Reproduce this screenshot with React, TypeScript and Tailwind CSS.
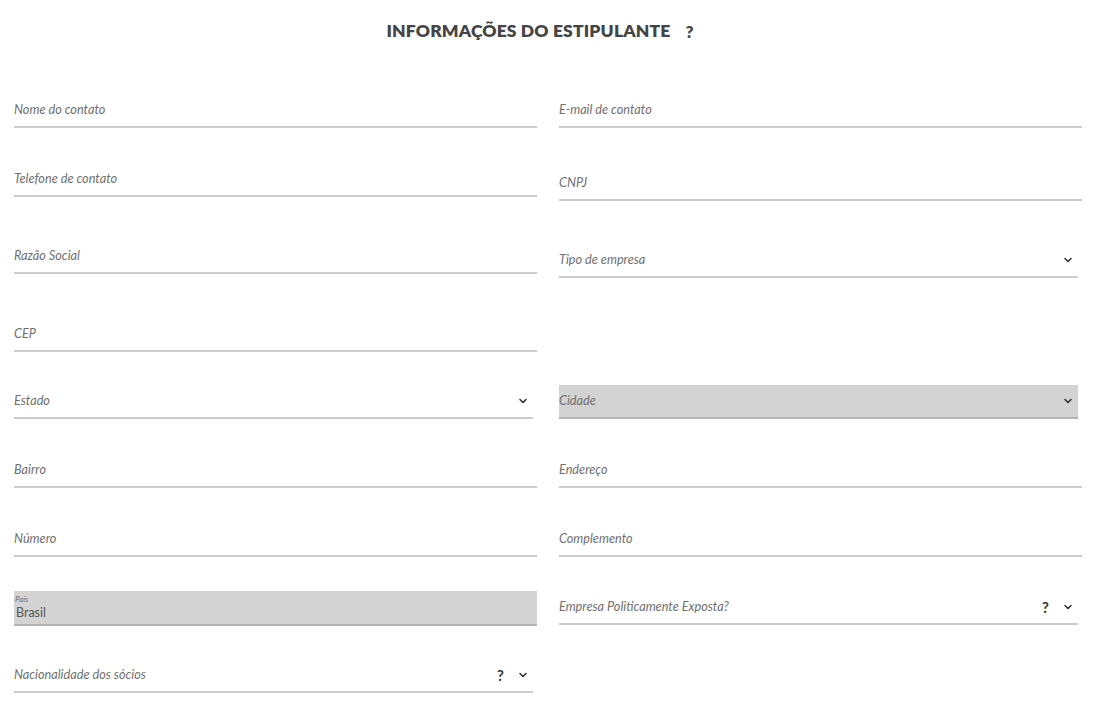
import { ChevronDown } from 'lucide-react';

type FieldProps = {
  label: string;
  select?: boolean;
  help?: boolean;
  disabled?: boolean;
};

function Field({ label, select, help, disabled }: FieldProps) {
  return (
    <div
      className={`flex h-[34px] items-center border-b-2 ${
        disabled ? 'border-[#b4b4b4] bg-[#d3d3d3]' : 'border-[#cbcbcb]'
      } ${select ? 'w-[519px]' : 'w-[523px]'}`}
    >
      <span className="flex-1 text-[12.7px] italic text-[#707070]">{label}</span>
      {help && <span className="mr-[13px] text-[15px] font-bold text-[#333]">?</span>}
      {select && <ChevronDown className="mr-[4px] h-[12px] w-[12px] text-[#333]" strokeWidth={3.2} />}
    </div>
  );
}

function CountryField() {
  return (
    <div className="flex h-[35px] w-[523px] flex-col justify-center border-b-2 border-[#b4b4b4] bg-[#d3d3d3] pl-[1px]">
      <span className="text-[8px] leading-[9px] italic text-[#707070]">País</span>
      <span className="pl-[1px] text-[12.5px] leading-[17px] text-[#555]">Brasil</span>
    </div>
  );
}

export default function App() {
  return (
    <div className="min-h-[701px] w-[1094px] bg-white font-['Lato','Open_Sans',sans-serif]">
      <div className="flex h-[62px] items-center justify-center pr-[14px] pt-[1px]">
        <h1 className="text-[17.5px] font-extrabold tracking-[0.15px] text-[#454545]">INFORMAÇÕES DO ESTIPULANTE</h1>
        <span className="ml-[15px] text-[17px] font-extrabold text-[#454545]">?</span>
      </div>

      <div className="flex flex-col pl-[14px] pr-[12px]">
        <div className="mt-[32px] flex justify-between">
          <Field label="Nome do contato" />
          <Field label="E-mail de contato" />
        </div>
        <div className="mt-[35px] flex items-start justify-between">
          <Field label="Telefone de contato" />
          <div className="mt-[4px]">
            <Field label="CNPJ" />
          </div>
        </div>
        <div className="mt-[39px] flex items-start justify-between">
          <Field label="Razão Social" />
          <div className="mt-[4px] w-[523px]">
            <Field label="Tipo de empresa" select />
          </div>
        </div>
        <div className="mt-[40px] flex justify-between">
          <Field label="CEP" />
        </div>
        <div className="mt-[33px] flex justify-between">
          <div className="w-[523px]">
            <Field label="Estado" select />
          </div>
          <div className="w-[523px]">
            <Field label="Cidade" select disabled />
          </div>
        </div>
        <div className="mt-[35px] flex justify-between">
          <Field label="Bairro" />
          <Field label="Endereço" />
        </div>
        <div className="mt-[35px] flex justify-between">
          <Field label="Número" />
          <Field label="Complemento" />
        </div>
        <div className="mt-[34px] flex items-start justify-between">
          <CountryField />
          <div className="w-[523px]">
            <Field label="Empresa Politicamente Exposta?" select help />
          </div>
        </div>
        <div className="mt-[33px] flex justify-between">
          <div className="w-[523px]">
            <Field label="Nacionalidade dos sócios" select help />
          </div>
        </div>
      </div>
    </div>
  );
}
